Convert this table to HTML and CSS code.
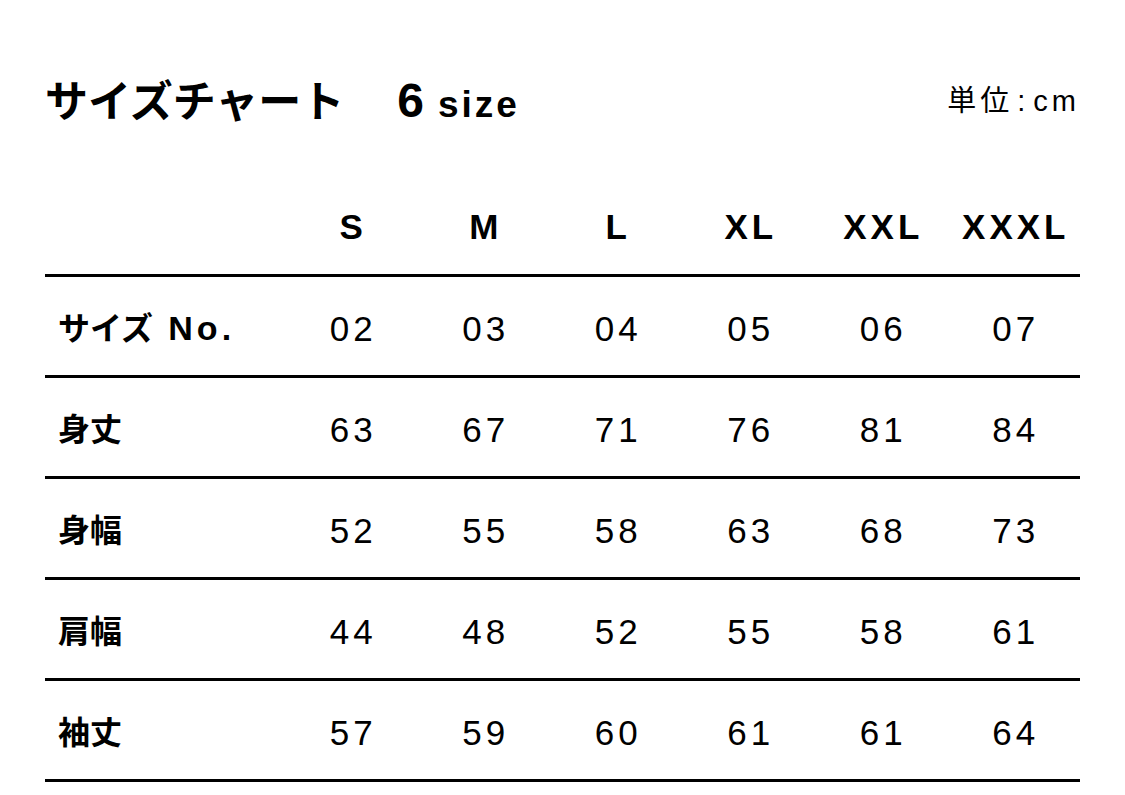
FILE: index.html
```html
<!DOCTYPE html>
<html lang="ja">
<head>
<meta charset="utf-8">
<title>サイズチャート</title>
<link rel="stylesheet" href="styles.css">
</head>
<body>
<div class="page">
  <div class="title-row">
    <h1 class="title"><span class="title-jp">サイズチャート</span><span class="title-num">6</span><span class="title-size">size</span></h1>
    <div class="unit">単位<span class="colon">:</span>cm</div>
  </div>
  <table class="chart">
    <colgroup>
      <col class="col-label">
      <col class="col-size"><col class="col-size"><col class="col-size">
      <col class="col-size"><col class="col-size"><col class="col-size">
    </colgroup>
    <thead>
      <tr>
        <th class="label"></th>
        <th>S</th>
        <th>M</th>
        <th>L</th>
        <th>XL</th>
        <th>XXL</th>
        <th>XXXL</th>
      </tr>
    </thead>
    <tbody>
      <tr>
        <th class="label">サイズ <span class="latin">No.</span></th>
        <td>02</td><td>03</td><td>04</td><td>05</td><td>06</td><td>07</td>
      </tr>
      <tr>
        <th class="label">身丈</th>
        <td>63</td><td>67</td><td>71</td><td>76</td><td>81</td><td>84</td>
      </tr>
      <tr>
        <th class="label">身幅</th>
        <td>52</td><td>55</td><td>58</td><td>63</td><td>68</td><td>73</td>
      </tr>
      <tr>
        <th class="label">肩幅</th>
        <td>44</td><td>48</td><td>52</td><td>55</td><td>58</td><td>61</td>
      </tr>
      <tr>
        <th class="label">袖丈</th>
        <td>57</td><td>59</td><td>60</td><td>61</td><td>61</td><td>64</td>
      </tr>
    </tbody>
  </table>
</div>
</body>
</html>
```

FILE: styles.css
```css
html, body {
  margin: 0;
  padding: 0;
  background: #ffffff;
  color: #000000;
}

body {
  font-family: "Liberation Sans", "Noto Sans CJK JP", sans-serif;
}

.page {
  width: 1035px;
  padding: 0 45px;
}

.title-row {
  display: flex;
  justify-content: space-between;
  align-items: flex-start;
  padding-top: 68px;
  height: 62px;
}

.title {
  margin: 0;
  font-weight: 700;
  line-height: 60px;
  display: flex;
  align-items: baseline;
}

.title-jp {
  font-family: "Noto Sans CJK JP", sans-serif;
  font-size: 43px;
  font-weight: 700;
}

.title-num {
  font-family: "Liberation Sans", sans-serif;
  font-size: 48px;
  font-weight: 700;
  margin-left: 53px;
}

.title-size {
  font-family: "Liberation Sans", sans-serif;
  font-size: 37px;
  font-weight: 700;
  letter-spacing: 3px;
  margin-left: 14px;
}

.unit {
  font-family: "Liberation Sans", "Noto Sans CJK JP", sans-serif;
  font-size: 29px;
  letter-spacing: 4px;
  line-height: 66px;
}

.unit .colon {
  margin: 0 4px;
}

.chart {
  margin-top: 50px;
  width: 1035px;
  border-collapse: collapse;
  table-layout: fixed;
}

.chart .col-label {
  width: 240px;
}

.chart .col-size {
  width: 132.5px;
}

.chart th,
.chart td {
  padding: 0;
  text-align: center;
  vertical-align: middle;
}

.chart thead th {
  height: 94px;
  font-size: 35px;
  font-weight: 700;
  letter-spacing: 4px;
  padding-left: 4px;
  border-bottom: 3px solid #000;
}

.chart thead th.label {
  padding-left: 0;
}

.chart tbody tr {
  border-bottom: 3px solid #000;
}

.chart tbody th {
  height: 98px;
}

.chart tbody td {
  height: 92px;
  font-size: 35px;
  letter-spacing: 4px;
  padding-left: 4px;
  padding-top: 6px;
}

.chart tbody th.label {
  text-align: left;
  padding-left: 13px;
  font-family: "Noto Sans CJK JP", sans-serif;
  font-size: 32px;
  font-weight: 700;
}

.chart tbody th.label .latin {
  font-family: "Liberation Sans", sans-serif;
  font-size: 34px;
  letter-spacing: 4px;
  margin-left: 8px;
}
```
